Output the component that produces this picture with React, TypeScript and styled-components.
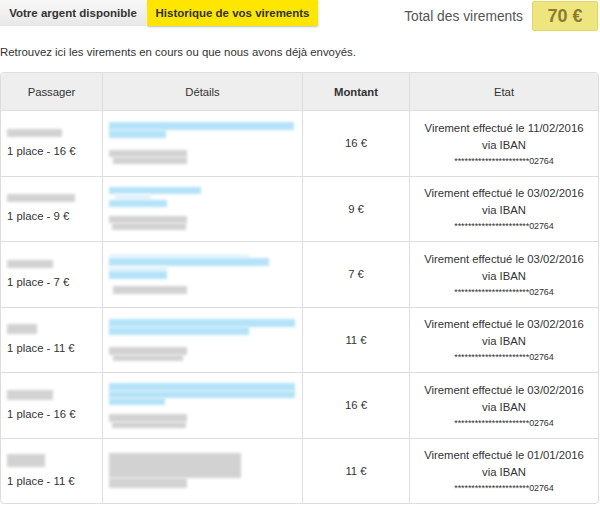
import React from "react";
import styled, { createGlobalStyle } from "styled-components";

const Global = createGlobalStyle`
  html, body { margin: 0; padding: 0; background: #fff; }
  body { font-family: "Liberation Sans", Arial, sans-serif; color: #333; }
`;

const Page = styled.div`
  width: 600px;
  display: flex;
  flex-direction: column;
`;

const TopBar = styled.div`
  display: flex;
  align-items: flex-start;
  height: 32px;
`;

const Tabs = styled.div`
  display: flex;
`;

const Tab = styled.div<{ $active?: boolean }>`
  height: 26px;
  display: flex;
  align-items: center;
  justify-content: center;
  font-size: 11.5px;
  font-weight: bold;
  color: #333;
  width: ${(p) => (p.$active ? "171px" : "146px")};
  margin-left: ${(p) => (p.$active ? "1px" : "0")};
  background: ${(p) =>
    p.$active ? "#ffe600" : "linear-gradient(#f9f9f9, #e7e7e7)"};
  box-shadow: ${(p) => (p.$active ? "0 1px 2px rgba(0,0,0,0.25)" : "none")};
  border-radius: ${(p) => (p.$active ? "0 0 2px 2px" : "0")};
`;

const Total = styled.div`
  margin-left: auto;
  display: flex;
  align-items: center;
  gap: 9px;
  padding-top: 1px;
`;

const TotalLabel = styled.span`
  font-size: 13.8px;
  color: #555;
`;

const Badge = styled.span`
  width: 64px;
  height: 28px;
  display: flex;
  align-items: center;
  justify-content: center;
  background: #efe57e;
  border: 1px solid #e3d66a;
  border-radius: 2px;
  font-size: 18px;
  font-weight: bold;
  color: #8a7b30;
  margin-right: 2px;
`;

const Intro = styled.p`
  margin: 13px 0 12px;
  font-size: 11.4px;
  color: #333;
  line-height: 15px;
`;

const Table = styled.table`
  width: 599px;
  border-collapse: separate;
  border-spacing: 0;
  border: 1px solid #ddd;
  border-radius: 4px;
  overflow: hidden;
  font-size: 11.3px;
  table-layout: fixed;
`;

const Th = styled.th<{ $bold?: boolean; $w: number }>`
  width: ${(p) => p.$w}px;
  height: 37px;
  padding: 0;
  background: #eeeeee;
  border-bottom: 1px solid #ddd;
  border-left: 1px solid #ddd;
  &:first-child { border-left: none; }
  font-weight: ${(p) => (p.$bold ? "bold" : "normal")};
  color: #333;
  text-align: center;
`;

const Td = styled.td<{ $align?: string }>`
  height: 64.5px;
  padding: 0 6px;
  border-left: 1px solid #ddd;
  &:first-child { border-left: none; }
  tr:not(:last-child) > & { border-bottom: 1px solid #ddd; }
  vertical-align: middle;
  text-align: ${(p) => p.$align || "left"};
  color: #333;
`;

const Stack = styled.div`
  display: flex;
  flex-direction: column;
  align-items: flex-start;
`;

const Blob = styled.span<{ $c: "blue" | "gray" | "faint"; $w: number; $h: number; $ml?: number; $mt?: number }>`
  display: block;
  width: ${(p) => p.$w}px;
  height: ${(p) => p.$h}px;
  margin-left: ${(p) => p.$ml || 0}px;
  margin-top: ${(p) => p.$mt || 0}px;
  background: ${(p) =>
    p.$c === "blue" ? "#b4e2f8" : p.$c === "faint" ? "#e4f4fc" : "#d2d2d2"};
  filter: blur(1.8px);
`;

const Place = styled.div`
  margin-top: 7px;
  line-height: 14px;
`;

const EtatLine = styled.div`
  line-height: 17px;
`;

const Iban = styled.div`
  font-size: 9px;
  line-height: 12px;
  letter-spacing: -0.1px;
  margin-top: 1px;
`;

type B = { c: "blue" | "gray" | "faint"; w: number; h: number; ml?: number; mt?: number };

const rows: {
  name: B[];
  place: string;
  details: B[];
  amount: string;
  date: string;
}[] = [
  {
    name: [{ c: "gray", w: 55, h: 8 }],
    place: "1 place - 16 €",
    details: [
      { c: "blue", w: 185, h: 8 },
      { c: "blue", w: 57, h: 8 },
      { c: "gray", w: 78, h: 7, mt: 12 },
      { c: "gray", w: 74, h: 7, ml: 4 },
    ],
    amount: "16 €",
    date: "11/02/2016",
  },
  {
    name: [{ c: "gray", w: 68, h: 8 }],
    place: "1 place - 9 €",
    details: [
      { c: "blue", w: 92, h: 7 },
      { c: "faint", w: 36, h: 6, ml: 6 },
      { c: "blue", w: 58, h: 7 },
      { c: "gray", w: 78, h: 7, mt: 9 },
      { c: "gray", w: 74, h: 7, ml: 3 },
    ],
    amount: "9 €",
    date: "03/02/2016",
  },
  {
    name: [{ c: "gray", w: 46, h: 8 }],
    place: "1 place - 7 €",
    details: [
      { c: "faint", w: 140, h: 4 },
      { c: "blue", w: 160, h: 8 },
      { c: "faint", w: 58, h: 5 },
      { c: "blue", w: 58, h: 8 },
      { c: "gray", w: 74, h: 8, mt: 7, ml: 4 },
    ],
    amount: "7 €",
    date: "03/02/2016",
  },
  {
    name: [{ c: "gray", w: 30, h: 10 }],
    place: "1 place - 11 €",
    details: [
      { c: "blue", w: 186, h: 8 },
      { c: "blue", w: 140, h: 8 },
      { c: "gray", w: 78, h: 8, mt: 12 },
      { c: "gray", w: 70, h: 6, ml: 4 },
    ],
    amount: "11 €",
    date: "03/02/2016",
  },
  {
    name: [{ c: "gray", w: 46, h: 10 }],
    place: "1 place - 16 €",
    details: [
      { c: "blue", w: 186, h: 8 },
      { c: "blue", w: 186, h: 7 },
      { c: "blue", w: 56, h: 7 },
      { c: "gray", w: 78, h: 8, mt: 9 },
      { c: "gray", w: 74, h: 6, ml: 3 },
    ],
    amount: "16 €",
    date: "03/02/2016",
  },
  {
    name: [{ c: "gray", w: 38, h: 13 }],
    place: "1 place - 11 €",
    details: [
      { c: "gray", w: 132, h: 25 },
      { c: "gray", w: 78, h: 10 },
    ],
    amount: "11 €",
    date: "01/01/2016",
  },
];

export default function App() {
  return (
    <Page>
      <Global />
      <TopBar>
        <Tabs>
          <Tab>Votre argent disponible</Tab>
          <Tab $active>Historique de vos virements</Tab>
        </Tabs>
        <Total>
          <TotalLabel>Total des virements</TotalLabel>
          <Badge>70 €</Badge>
        </Total>
      </TopBar>
      <Intro>Retrouvez ici les virements en cours ou que nous avons déjà envoyés.</Intro>
      <Table>
        <thead>
          <tr>
            <Th $w={101}>Passager</Th>
            <Th $w={199}>Détails</Th>
            <Th $w={106} $bold>Montant</Th>
            <Th $w={188}>Etat</Th>
          </tr>
        </thead>
        <tbody>
          {rows.map((r, i) => (
            <tr key={i}>
              <Td>
                <Stack>
                  {r.name.map((b, j) => (
                    <Blob key={j} $c={b.c} $w={b.w} $h={b.h} $ml={b.ml} $mt={b.mt} />
                  ))}
                </Stack>
                <Place>{r.place}</Place>
              </Td>
              <Td>
                <Stack>
                  {r.details.map((b, j) => (
                    <Blob key={j} $c={b.c} $w={b.w} $h={b.h} $ml={b.ml} $mt={b.mt} />
                  ))}
                </Stack>
              </Td>
              <Td $align="center">{r.amount}</Td>
              <Td $align="center">
                <EtatLine>Virement effectué le {r.date}</EtatLine>
                <EtatLine>via IBAN</EtatLine>
                <Iban>**********************02764</Iban>
              </Td>
            </tr>
          ))}
        </tbody>
      </Table>
    </Page>
  );
}
